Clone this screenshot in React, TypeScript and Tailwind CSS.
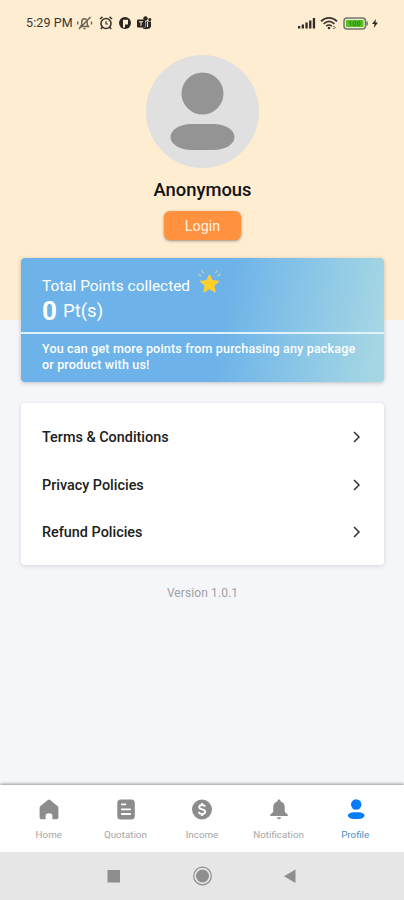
import type { ReactNode } from "react";

interface NavItem {
  label: string;
  icon: ReactNode;
  active?: boolean;
}

const policies = ["Terms & Conditions", "Privacy Policies", "Refund Policies"];

const navItems: NavItem[] = [
  {
    label: "Home",
    icon: (
      <path d="M9.9 1a1.6 1.6 0 0 1 2.2 0l7.4 6a2.2 2.2 0 0 1 .9 1.8v9.7a1.8 1.8 0 0 1-1.8 1.8h-4.2v-4c0-1.2-1.2-2-3.4-2s-3.400.8-3.400 2v4H3.400a1.800 1.800 0 0 1-1.800-1.800V8.800A2.200 2.200 0 0 1 2.500 7z" />
    ),
  },
  {
    label: "Quotation",
    icon: (
      <>
        <rect x="2.3" y="0.5" width="17.5" height="20" rx="3.5" />
        <path d="M6.1 5.3h5M6.1 10.3h9.8M6.1 15h9.8" stroke="#fff" strokeWidth="1.8" />
      </>
    ),
  },
  {
    label: "Income",
    icon: (
      <>
        <circle cx="11" cy="10.5" r="10" />
        <path
          d="M14 7.8c-.3-1.2-1.4-1.8-2.9-1.8-1.7 0-2.9.8-2.9 2.1 0 3.2 6 1.5 6 4.7 0 1.4-1.3 2.2-3.1 2.2s-3-.8-3.3-2.1M11.1 4v2M11.1 15v2"
          fill="none"
          stroke="#fff"
          strokeWidth="1.9"
        />
      </>
    ),
  },
  {
    label: "Notification",
    icon: (
      <path d="M11 .5c.9 0 1.5.6 1.5 1.5v.6c2.7.7 4.3 2.9 4.3 5.8v4.6l2.9 2.6v1.4H2.3v-1.4l2.9-2.6V8.4c0-2.9 1.6-5.1 4.3-5.8V2c0-.9.6-1.5 1.5-1.5zM9 18.3h4a2 2 0 0 1-4 0z" />
    ),
  },
  {
    label: "Profile",
    active: true,
    icon: (
      <>
        <circle cx="11.2" cy="5.5" r="5.2" />
        <rect x="2.9" y="13.2" width="16.6" height="6.8" rx="6" ry="3.4" />
      </>
    ),
  },
];

function StatusBar() {
  return (
    <div className="flex h-[46px] items-center justify-between pr-6 pl-[26px] text-[#3b352d]">
      <div className="flex items-center">
        <span className="w-[50px] text-[12.5px] tracking-[0.1px] whitespace-nowrap">5:29 PM</span>
        <svg className="h-4 w-[78px]" viewBox="0 0 78 16" fill="none" stroke="currentColor">
          {/* muted bell */}
          <path
            d="M4.5 11.5h8l-1.3-2V7.2c0-2-1.2-3.4-2.8-3.4S5.7 5.2 5.7 7.2v2.3zM7.3 13.6h2.3M3 14 14.5 2M1.8 6.5v3M15.5 6.5v3"
            stroke="#6b6256"
            strokeWidth="1.4"
          />
          {/* alarm */}
          <circle cx="30" cy="8.5" r="5" strokeWidth="1.6" />
          <path d="m24 4 2.500-2.200M36 4l-2.500-2.200M26.300 12.300l-1.500 1.700M33.700 12.300l1.500 1.700" strokeWidth="1.6" />
          <path d="M30 6v3h2" strokeWidth="1.1" />
          <circle cx="49" cy="8" r="6" fill="#282522" stroke="none" />
          <path d="M47 4.8h5v4.7h-3v3h-2z" fill="#ffedd2" stroke="none" />
          {/* teams */}
          <g fill="#282522" stroke="none">
            <rect x="61" y="4.5" width="8" height="8" rx="1" />
            <circle cx="69.5" cy="3.5" r="2.2" />
            <circle cx="73.8" cy="4.5" r="1.5" />
            <path d="M69.5 6.5H75v4.7a3 3 0 0 1-3 2.5c-2.5 1-5 .2-5.7-1.2h3.2z" />
          </g>
          <path d="M63 6.7h4M65 6.7v4M71.5 7v5" stroke="#ffedd2" strokeWidth="1.1" />
        </svg>
      </div>
      <svg className="h-4 w-[84px]" viewBox="0 0 84 16">
        <g fill="#302c27">
          <rect x="2" y="11" width="2.3" height="2.5" />
          <rect x="5.7" y="9.5" width="2.3" height="4" />
          <rect x="9.4" y="7.5" width="2.3" height="6" />
          <rect x="13.1" y="5.5" width="2.3" height="8" />
          <rect x="16.8" y="3" width="2.3" height="10.5" />
        </g>
        <path
          d="M25 6.3c4.800-4.600 11.200-4.600 16 0M27.600 8.800c3.300-3 7.500-3 10.800 0M30.200 11.200c1.800-1.500 3.800-1.500 5.600 0"
          fill="none"
          stroke="#39342e"
          strokeWidth="1.6"
        />
        <circle cx="33" cy="13" r="1.3" fill="#39342e" />
        <path d="m37 11 2.5 1.5-2.5 1.5" fill="none" stroke="#777067" />
        <rect x="48" y="3" width="21.5" height="11" rx="3" fill="#e5edcb" stroke="#77756d" strokeWidth="1.5" />
        <rect x="50" y="5" width="17.5" height="7" rx="1" fill="#53c51e" />
        <text x="52" y="11.2" fontSize="7.5" fontWeight="700" fill="#3a8123" fontFamily="Roboto">100</text>
        <path d="M71 6.5v4" stroke="#77756d" strokeWidth="1.6" />
        <path d="m80 4-4 5h2.500l-.7 4 4.200-5.500h-2.500z" fill="#302c27" />
      </svg>
    </div>
  );
}

function Star() {
  return (
    <svg className="absolute top-[11px] left-[175px] h-7 w-7" viewBox="0 0 28 28">
      <path
        d="m13.5 5.5 2.8 6 6.6.8-4.9 4.4 1.3 6.5-5.8-3.3-5.8 3.3L9 16.700l-4.900-4.400 6.600-.8z"
        fill="#ffd02d"
        stroke="#ffd02d"
        strokeWidth=".8"
        strokeLinejoin="round"
      />
      <path
        d="m2.5 5 3 2.3M5.5 1.3l2.3 3M24.5 5l-3 2.3M21.5 1.3l-2.3 3"
        stroke="#c9cf96"
        strokeWidth="1.2"
      />
    </svg>
  );
}

function PointsCard() {
  return (
    <section className="relative h-[124px] rounded-[4px] bg-[linear-gradient(100deg,#6db3e9_0%,#6db3e9_55%,#a4d6e4_96%)] text-white shadow-[0_1px_4px_rgba(0,0,0,0.22)]">
      <div className="h-[76px] border-b-2 border-[#e1f1fa] px-[21px] pt-[18px]">
        <p className="text-[15.4px] leading-5">Total Points collected</p>
        <p className="flex items-center gap-1.5 text-[18.5px] leading-[30px]">
          <strong className="text-[26px] font-bold">0</strong>Pt(s)
        </p>
      </div>
      <p className="px-[21px] pt-[7px] text-[12.5px] leading-[15.5px] font-medium tracking-[0.18px] whitespace-nowrap">
        You can get more points from purchasing any package
        <br />
        or product with us!
      </p>
      <Star />
    </section>
  );
}

export default function App() {
  return (
    <div className="flex h-[900px] w-[404px] flex-col overflow-hidden bg-[linear-gradient(#ffedd2_320px,#f4f6fa_320px)] font-['Roboto',sans-serif]">
      <StatusBar />
      <main className="flex flex-1 flex-col pt-[9px] pr-5 pl-[21px]">
        <header className="flex flex-col items-center">
          <svg className="h-[113px] w-[113px]" viewBox="0 0 113 113">
            <circle cx="56.5" cy="56.5" r="56.5" fill="#e0e0e0" />
            <circle cx="56.5" cy="38.5" r="21" fill="#949494" />
            <rect x="24.5" y="69" width="64" height="26" rx="21" ry="13" fill="#949494" />
          </svg>
          <h1 className="mt-[11px] text-[18.4px] leading-[22px] font-medium text-[#111]">Anonymous</h1>
          <button className="mt-[10px] h-[29px] w-[77px] rounded-[6px] bg-[#ff913f] pt-0.5 text-[14.3px] text-[#fff3e3] shadow-[0_1px_3px_rgba(0,0,0,0.4)]">
            Login
          </button>
        </header>
        <div className="mt-[18px]">
          <PointsCard />
        </div>
        <section className="mt-[21px] flex h-[162px] flex-col rounded-[4px] bg-white px-[21px] pt-[11px] pb-2 shadow-[0_1px_4px_rgba(0,0,0,0.14)]">
          {policies.map((label) => (
            <button
              key={label}
              className="flex flex-1 items-center justify-between text-left text-[14.4px] font-medium text-[#202020]"
            >
              {label}
              <svg className="mr-0.5 mb-0.5 h-3 w-2" viewBox="0 0 8 12" fill="none" stroke="#333" strokeWidth="1.5">
                <path d="m1 1 5 5-5 5" />
              </svg>
            </button>
          ))}
        </section>
        <p className="mt-5 text-center text-[12px] leading-4 tracking-[0.1px] text-[#a0a1a4]">Version 1.0.1</p>
      </main>
      <nav className="flex h-[67px] bg-white px-[10.5px] shadow-[0_-1px_3px_rgba(0,0,0,0.4)]">
        {navItems.map(({ label, icon, active }) => (
          <button
            key={label}
            className={`flex flex-1 flex-col items-center pt-[14px] ${active ? "text-[#087cf9]" : "text-[#8c8c8c]"}`}
          >
            <svg className="h-[21px] w-[21px]" viewBox="0 0 21 21" fill="currentColor">
              {icon}
            </svg>
            <span className={`mt-[9px] text-[9.8px] leading-3 ${active ? "text-[#4a8fc0]" : "text-[#a5a5a5]"}`}>
              {label}
            </span>
          </button>
        ))}
      </nav>
      <div className="flex h-12 items-center bg-[#e6e6e6] pl-[107px] text-[#8e8e8e]">
        <svg className="h-5 w-[190px]" viewBox="0 0 190 20" fill="currentColor">
          <rect x="0.5" y="4" width="12.5" height="12.5" />
          <circle cx="95.5" cy="10" r="6.5" />
          <circle cx="95.5" cy="10" r="8.8" fill="none" stroke="currentColor" strokeWidth="1.2" />
          <path d="M177 10.3 188.5 3.500v13.500z" />
        </svg>
      </div>
    </div>
  );
}
